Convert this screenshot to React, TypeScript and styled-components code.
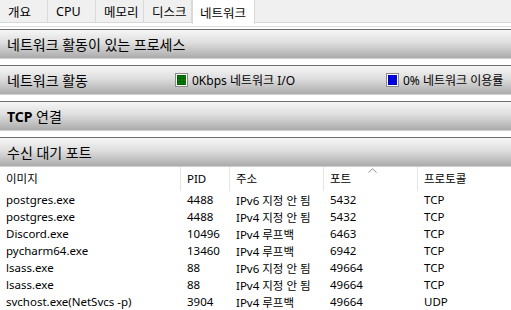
import styled, { createGlobalStyle } from 'styled-components';

const GlobalStyle = createGlobalStyle`
  html, body {
    margin: 0;
    padding: 0;
    background: #ffffff;
  }
  body {
    font-family: "Noto Sans", "Noto Sans CJK KR", sans-serif;
    color: #000;
    overflow: hidden;
  }
`;

const Window = styled.div`
  width: 511px;
  height: 310px;
  overflow: hidden;
  background: #ffffff;
`;

const TabBar = styled.div`
  display: flex;
  height: 22px;
  background: #f0f0f0;
  border-bottom: 1px solid #d9d9d9;
`;

const Tab = styled.div<{ $active?: boolean; $width: number }>`
  box-sizing: border-box;
  width: ${(p) => p.$width}px;
  height: ${(p) => (p.$active ? 24 : 22)}px;
  padding-left: ${(p) => (p.$active ? 7 : 8)}px;
  display: flex;
  align-items: center;
  font-size: 12.5px;
  color: #000;
  background: ${(p) => (p.$active ? '#ffffff' : 'transparent')};
  border-right: 1px solid #d9d9d9;
  border-left: ${(p) => (p.$active ? '1px solid #d9d9d9' : 'none')};
  position: relative;
  z-index: ${(p) => (p.$active ? 1 : 0)};
`;

const Content = styled.div`
  padding-top: 3px;
`;

const Rule = styled.div`
  height: 1px;
  background: #dcdcdc;
  margin-bottom: 2px;
`;

const Section = styled.div`
  margin-bottom: 6px;
`;

const SectionHeader = styled.div`
  box-sizing: border-box;
  height: 30px;
  border-top: 1px solid #6e6e6e;
  border-bottom: 1px solid #cfcfcf;
  background: linear-gradient(to bottom, #f6f6f6 0%, #dedede 45%, #b9b9b9 85%, #ababab 100%);
  display: grid;
  grid-template-columns: 169px 211px 1fr;
  align-items: center;
  padding-left: 7px;
  font-size: 14px;
  white-space: nowrap;
`;

const Bold = styled.b`
  font-weight: 700;
`;

const Legend = styled.div`
  display: flex;
  align-items: center;
  gap: 5px;
  font-size: 12px;
`;

const Swatch = styled.span<{ $color: string }>`
  box-sizing: border-box;
  width: 11px;
  height: 12px;
  border: 1px solid #ffffff;
  outline: 1px solid #8a8a8a;
  background-color: ${(p) => p.$color};
  background-image: linear-gradient(to right, rgba(0, 0, 0, 0.22) 1px, transparent 1px),
    linear-gradient(to bottom, rgba(0, 0, 0, 0.22) 1px, transparent 1px);
  background-size: 3px 3px;
`;

const Table = styled.div`
  font-size: 11.5px;
`;

const HeaderRow = styled.div`
  display: grid;
  grid-template-columns: 180px 49px 94px 94px 1fr;
  height: 24px;
  position: relative;
`;

const HeadCell = styled.div<{ $first?: boolean }>`
  display: flex;
  align-items: center;
  padding-left: 6px;
  padding-bottom: 2px;
  border-left: ${(p) => (p.$first ? 'none' : '1px solid #e5e5e5')};
`;

const SortArrow = styled.svg`
  position: absolute;
  left: 368px;
  top: 1px;
`;

const Row = styled.div`
  display: grid;
  grid-template-columns: 180px 49px 94px 94px 1fr;
  height: 17px;
  align-items: center;
`;

const Cell = styled.div`
  padding-left: 6px;
  white-space: nowrap;
  & + & {
    padding-left: 7px;
  }
`;

const tabs = [
  { label: '개요', width: 48 },
  { label: 'CPU', width: 48 },
  { label: '메모리', width: 48 },
  { label: '디스크', width: 48 },
  { label: '네트워크', width: 63, active: true },
];

const rows = [
  ['postgres.exe', '4488', 'IPv6 지정 안 됨', '5432', 'TCP'],
  ['postgres.exe', '4488', 'IPv4 지정 안 됨', '5432', 'TCP'],
  ['Discord.exe', '10496', 'IPv4 루프백', '6463', 'TCP'],
  ['pycharm64.exe', '13460', 'IPv4 루프백', '6942', 'TCP'],
  ['lsass.exe', '88', 'IPv6 지정 안 됨', '49664', 'TCP'],
  ['lsass.exe', '88', 'IPv4 지정 안 됨', '49664', 'TCP'],
  ['svchost.exe(NetSvcs -p)', '3904', 'IPv4 루프백', '49664', 'UDP'],
];

export default function App() {
  return (
    <Window>
      <GlobalStyle />
      <TabBar>
        {tabs.map((t) => (
          <Tab key={t.label} $width={t.width} $active={t.active}>
            {t.label}
          </Tab>
        ))}
      </TabBar>
      <Content>
        <Rule />
        <Section>
          <SectionHeader>네트워크 활동이 있는 프로세스</SectionHeader>
        </Section>
        <Section>
          <SectionHeader>
            <span>네트워크 활동</span>
            <Legend>
              <Swatch $color="#008000" />
              0Kbps 네트워크 I/O
            </Legend>
            <Legend>
              <Swatch $color="#0000ff" />
              0% 네트워크 이용률
            </Legend>
          </SectionHeader>
        </Section>
        <Section>
          <SectionHeader>
            <span>
              <Bold>TCP</Bold> 연결
            </span>
          </SectionHeader>
        </Section>
        <SectionHeader>수신 대기 포트</SectionHeader>
        <Table>
          <HeaderRow>
            <HeadCell $first>이미지</HeadCell>
            <HeadCell>PID</HeadCell>
            <HeadCell>주소</HeadCell>
            <HeadCell>포트</HeadCell>
            <HeadCell>프로토콜</HeadCell>
            <SortArrow width="9" height="5" viewBox="0 0 9 5">
              <path d="M0.5 4.5 L4.5 0.8 L8.5 4.5" fill="none" stroke="#8c8c8c" strokeWidth="1" />
            </SortArrow>
          </HeaderRow>
          {rows.map((r, i) => (
            <Row key={i}>
              {r.map((c, j) => (
                <Cell key={j}>{c}</Cell>
              ))}
            </Row>
          ))}
        </Table>
      </Content>
    </Window>
  );
}
